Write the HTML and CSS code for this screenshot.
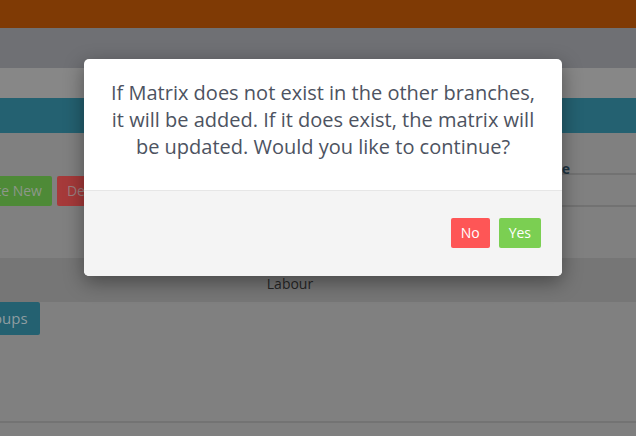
FILE: index.html
```html
<!DOCTYPE html>
<html lang="en">
<head>
<meta charset="utf-8">
<title>Matrix</title>
<link rel="stylesheet" href="styles.css">
</head>
<body>
<div class="page">
  <div class="topbar"></div>
  <div class="subbar"></div>
  <div class="strip"></div>
  <div class="panel-head"></div>
  <div class="content">
    <div class="actions">
      <span class="btn btn-create">Create New</span>
      <span class="btn btn-delete">Delete</span>
    </div>
    <div class="table">
      <div class="thead"><span class="th">Date</span></div>
      <div class="trow"></div>
    </div>
  </div>
  <div class="labour-row">Labour</div>
  <div class="groups-row"><span class="btn btn-groups">Groups</span></div>
  <div class="spacer"></div>
  <div class="bottom"></div>
</div>

<div class="modal">
  <div class="modal-body">
    <p>If Matrix does not exist in the other branches, it will be added. If it does exist, the matrix will be updated. Would you like to continue?</p>
  </div>
  <div class="modal-footer">
    <button class="mbtn mbtn-no">No</button>
    <button class="mbtn mbtn-yes">Yes</button>
  </div>
</div>
</body>
</html>
```
FILE: styles.css
```css
* { box-sizing: border-box; }
html, body { margin: 0; padding: 0; }
body {
  width: 636px;
  height: 436px;
  overflow: hidden;
  background: #7f7f7f;
  font-family: "Open Sans", "Liberation Sans", sans-serif;
}
.page { width: 636px; height: 436px; overflow: hidden; display: flex; flex-direction: column; }
.topbar { height: 28px; background: #7f3a05; flex: none; }
.subbar { height: 40px; background: #6f7074; flex: none; }
.strip { height: 30px; background: #878787; flex: none; }
.panel-head { height: 35px; background: #246171; flex: none; }
.content {
  height: 125px;
  flex: none;
  background: #808080;
  display: flex;
  justify-content: space-between;
}
.actions {
  padding-top: 43px;
  display: flex;
  gap: 5px;
  align-items: flex-start;
  margin-left: -44px;
}
.btn {
  display: inline-block;
  font-size: 14px;
  line-height: 20px;
  padding: 5px 10px;
  color: #8d978a;
  border-radius: 2px;
  white-space: nowrap;
}
.btn-create { background: #4e8a37; }
.btn-delete { background: #a63a3a; color: #9a7f7f; }
.table { width: 330px; padding-top: 28px; }
.thead {
  height: 14px;
  border-bottom: 2px solid #727272;
  text-align: right;
  padding-right: 66px;
}
.th {
  font-size: 14px;
  font-weight: 700;
  color: #1e3442;
  line-height: 14px;
  display: inline-block;
  transform: translateY(-4px);
}
.trow { height: 32px; border-bottom: 2px solid #727272; }
.labour-row {
  height: 44px;
  flex: none;
  background: #767676;
  font-size: 14px;
  color: #262626;
  line-height: 52px;
  text-align: center;
  padding-right: 56px;
}
.groups-row { flex: none; background: #808080; }
.btn-groups {
  background: #246171;
  color: #8f9da1;
  padding: 6px 12px 7px;
  margin-left: -36px;
  font-size: 15px;
}
.spacer { height: 86px; flex: none; background: #808080; }
.bottom { flex: 1; border-top: 2px solid #737373; background: #7f7f7f; }

.modal {
  position: absolute;
  left: 84px;
  top: 59px;
  width: 478px;
  height: 217px;
  background: #fff;
  border-radius: 5px;
  overflow: hidden;
  box-shadow: 0 6px 20px rgba(0, 0, 0, 0.4);
}
.modal-body {
  padding: 20px 24px 30px;
  text-align: center;
}
.modal-body p {
  margin: 0;
  font-size: 20px;
  line-height: 27px;
  color: #4d5361;
}
.modal-footer {
  height: 86px;
  background: #f4f4f4;
  border-top: 1px solid #e6e6e6;
  padding: 27px 21px 0;
  display: flex;
  justify-content: flex-end;
  align-items: flex-start;
  gap: 9px;
}
.mbtn {
  border: 0;
  margin: 0;
  font-family: "Open Sans", "Liberation Sans", sans-serif;
  font-size: 14px;
  line-height: 20px;
  padding: 5px 10px;
  color: #fff;
  border-radius: 2px;
}
.mbtn-no { background: #fe5656; }
.mbtn-yes { background: #7bcf52; }
```
